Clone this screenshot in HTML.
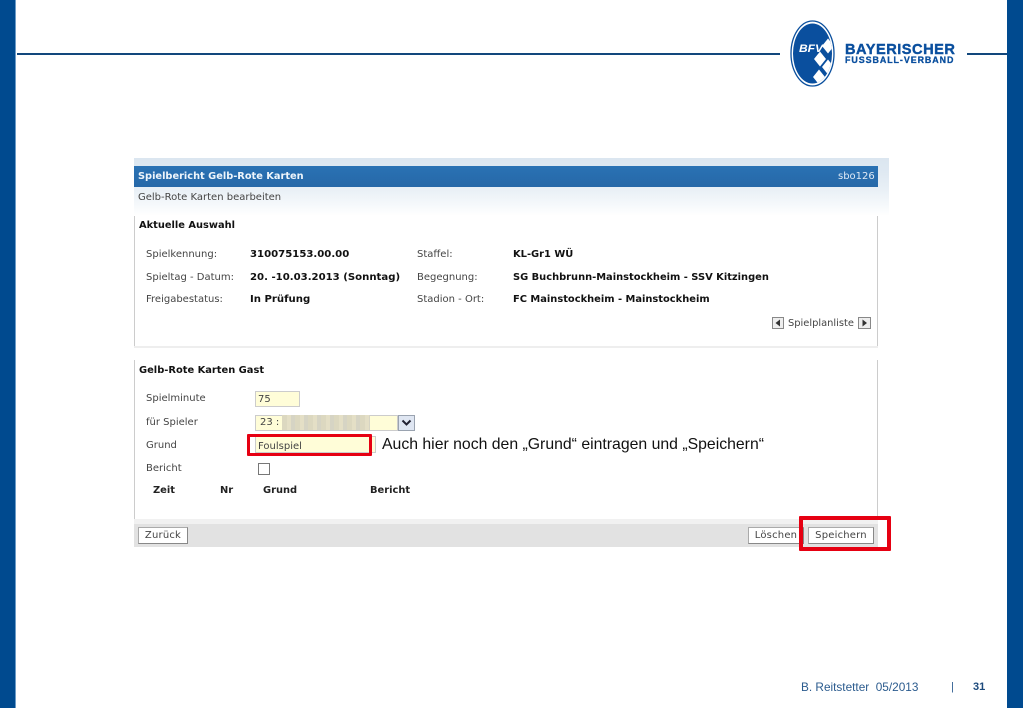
<!DOCTYPE html>
<html lang="de">
<head>
<meta charset="utf-8">
<title>Spielbericht Gelb-Rote Karten</title>
<style>
html,body{margin:0;padding:0;background:#fff}
#p{position:relative;width:1023px;height:708px;overflow:hidden;background:#fff;font-family:"DejaVu Sans",sans-serif;font-size:10px;color:#333}
#p div,#p span.t{position:absolute;white-space:nowrap}
.t{line-height:12px}
.b{font-weight:bold;color:#111;font-size:9.9px}
.d{font-size:10.15px}
.g{color:#444}
.btn{background:#fff;border:1px solid #aaa;box-sizing:border-box;text-align:center;line-height:15px;color:#444;border-right-color:#888;border-bottom-color:#888}
.inp{background:#fffdd8;border:1px solid #ccc;box-sizing:border-box}
.red{border:3px solid #e60012;box-sizing:border-box;border-radius:1px}
</style>
</head>
<body>
<div id="p">
<div style="left:0;top:0;width:15px;height:708px;background:#004a8f"></div>
<div style="left:15px;top:0;width:1px;height:708px;background:#6d9cc8"></div>
<div style="left:1007px;top:0;width:16px;height:708px;background:#004a8f"></div>
<div style="left:17px;top:53px;width:763px;height:2px;background:#12477c"></div>
<div style="left:967px;top:53px;width:40px;height:2px;background:#12477c"></div>

<svg style="position:absolute;left:789px;top:19px" width="48" height="70" viewBox="0 0 48 70">
<defs><clipPath id="c"><ellipse cx="23.5" cy="34.5" rx="19.5" ry="30"/></clipPath></defs>
<ellipse cx="23.5" cy="34.5" rx="21.5" ry="32.5" fill="#fff" stroke="#0a4f9e" stroke-width="1.3"/>
<ellipse cx="23.5" cy="34.5" rx="19.5" ry="30" fill="#0a4f9e"/>
<g clip-path="url(#c)" fill="#fff">
<path d="M39 19.5l6 7.5-6 7.5-6-7.5z"/>
<path d="M31 32.5l6 7.5-6 7.5-6-7.5z"/>
<path d="M39 40.5l6 7.5-6 7.5-6-7.5z"/>
<path d="M30 50.5l6 7.5-6 7.5-6-7.5z"/>
</g>
<text x="10" y="33" font-family="Liberation Sans, sans-serif" font-size="11" font-weight="bold" font-style="italic" fill="#fff" textLength="24" lengthAdjust="spacingAndGlyphs">BFV</text>
</svg>

<div style="left:845px;top:43px;font:bold 14.6px/15px 'Liberation Sans',sans-serif;color:#0a4f9e;letter-spacing:.5px;-webkit-text-stroke:.4px #0a4f9e">BAYERISCHER</div>
<div style="left:845px;top:56px;font:bold 8.9px/9px 'Liberation Sans',sans-serif;color:#0a4f9e;letter-spacing:.95px;-webkit-text-stroke:.3px #0a4f9e">FUSSBALL-VERBAND</div>

<!-- panel top gradient -->
<div style="left:134px;top:158px;width:755px;height:58px;background:linear-gradient(to bottom,#dbe6f0 0,#dfe9f2 25%,#e9f0f6 55%,#fff 100%)"></div>
<div style="left:134px;top:166px;width:744px;height:21px;background:linear-gradient(to bottom,#2a72b4,#2668a8)"></div>
<span class="t b" style="left:138px;top:171px;color:#eef5fb;font-size:9.8px">Spielbericht Gelb-Rote Karten</span>
<span class="t" style="left:838px;top:171px;color:#dfeaf5">sbo126</span>
<span class="t g" style="left:138px;top:192px">Gelb-Rote Karten bearbeiten</span>

<!-- Aktuelle Auswahl -->
<div style="left:134px;top:216px;width:1px;height:130px;background:#ccc"></div>
<div style="left:877px;top:216px;width:1px;height:130px;background:#ccc"></div>
<div style="left:134px;top:346px;width:744px;height:2px;background:#eee"></div>
<span class="t b" style="left:139px;top:220px;font-size:9.85px">Aktuelle Auswahl</span>

<span class="t g" style="left:146px;top:249px">Spielkennung:</span>
<span class="t b d" style="left:250px;top:249px">310075153.00.00</span>
<span class="t g" style="left:417px;top:249px">Staffel:</span>
<span class="t b" style="left:513px;top:249px">KL-Gr1 WÜ</span>

<span class="t g" style="left:146px;top:272px">Spieltag - Datum:</span>
<span class="t b d" style="left:250px;top:272px">20. -10.03.2013 (Sonntag)</span>
<span class="t g" style="left:417px;top:272px">Begegnung:</span>
<span class="t b" style="left:513px;top:272px">SG Buchbrunn-Mainstockheim - SSV Kitzingen</span>

<span class="t g" style="left:146px;top:294px">Freigabestatus:</span>
<span class="t b d" style="left:250px;top:294px">In Prüfung</span>
<span class="t g" style="left:417px;top:294px">Stadion - Ort:</span>
<span class="t b" style="left:513px;top:294px">FC Mainstockheim - Mainstockheim</span>

<svg style="position:absolute;left:772px;top:317px" width="12" height="12" viewBox="0 0 12 12"><rect x=".5" y=".5" width="11" height="11" fill="#eee" stroke="#888"/><path d="M8 2.5v7L3.5 6z" fill="#333"/></svg>
<span class="t g" style="left:788px;top:318px;font-size:9.9px">Spielplanliste</span>
<svg style="position:absolute;left:858px;top:317px" width="13" height="12" viewBox="0 0 13 12"><rect x=".5" y=".5" width="12" height="11" fill="#eee" stroke="#888"/><path d="M4.5 2.5v7L9 6z" fill="#333"/></svg>

<!-- Gast -->
<div style="left:134px;top:360px;width:1px;height:159px;background:#ccc"></div>
<div style="left:877px;top:360px;width:1px;height:159px;background:#ccc"></div>
<span class="t b" style="left:139px;top:365px">Gelb-Rote Karten Gast</span>

<span class="t g" style="left:146px;top:393px">Spielminute</span>
<div class="inp" style="left:255px;top:391px;width:45px;height:16px"></div>
<span class="t g" style="left:258px;top:394px">75</span>

<span class="t g" style="left:146px;top:417px">für Spieler</span>
<div class="inp" style="left:255px;top:415px;width:143px;height:16px"></div>
<span class="t g" style="left:260px;top:417px">23 :</span>
<div style="left:282px;top:415px;width:88px;height:15px;background:repeating-linear-gradient(90deg,#dcd8c0 0 5px,#e4dfc6 5px 9px,#d6d4c4 9px 13px)"></div>
<div style="left:398px;top:415px;width:17px;height:16px;box-sizing:border-box;background:#dfe6f2;border:1px solid #9aa3b0"></div>
<svg style="position:absolute;left:401px;top:419px" width="11" height="8" viewBox="0 0 11 8"><path d="M1.5 1.5L5.5 5.5 9.5 1.5" fill="none" stroke="#223" stroke-width="2"/></svg>

<span class="t g" style="left:146px;top:440px">Grund</span>
<div class="inp" style="left:255px;top:436px;width:121px;height:17px"></div>
<span class="t g" style="left:258px;top:441px">Foulspiel</span>
<div class="red" style="left:247px;top:434px;width:125px;height:22px"></div>
<div style="left:382px;top:436px;font:15.8px/18px 'Liberation Sans',sans-serif;color:#111">Auch hier noch den „Grund“ eintragen und „Speichern“</div>

<span class="t g" style="left:146px;top:463px">Bericht</span>
<div style="left:258px;top:463px;width:12px;height:12px;box-sizing:border-box;border:1px solid #777;background:#fff"></div>

<span class="t b" style="left:153px;top:485px;color:#222">Zeit</span>
<span class="t b" style="left:220px;top:485px;color:#222">Nr</span>
<span class="t b" style="left:263px;top:485px;color:#222">Grund</span>
<span class="t b" style="left:370px;top:485px;color:#222">Bericht</span>

<!-- footer bar -->
<div style="left:134px;top:519px;width:744px;height:5px;background:#f1f1f1"></div>
<div style="left:134px;top:524px;width:744px;height:23px;background:#e2e2e2"></div>
<div class="btn" style="left:138px;top:527px;width:50px;height:17px;letter-spacing:.2px">Zurück</div>
<div class="btn" style="left:748px;top:527px;width:56px;height:17px;letter-spacing:.2px">Löschen</div>
<div class="btn" style="left:808px;top:527px;width:66px;height:17px;letter-spacing:.2px">Speichern</div>
<div class="red" style="left:799px;top:516px;width:92px;height:35px;border-width:4px"></div>

<div style="left:801px;top:681px;font:11.8px/13px 'Liberation Sans',sans-serif;color:#2b5b8e">B. Reitstetter&nbsp; 05/2013</div>
<div style="left:951px;top:681px;font:11px/13px 'Liberation Sans',sans-serif;color:#2b5b8e">|</div>
<div style="left:973px;top:681px;font:bold 11px/13px 'Liberation Sans',sans-serif;color:#1c4a7c">31</div>
</div>
</body>
</html>
